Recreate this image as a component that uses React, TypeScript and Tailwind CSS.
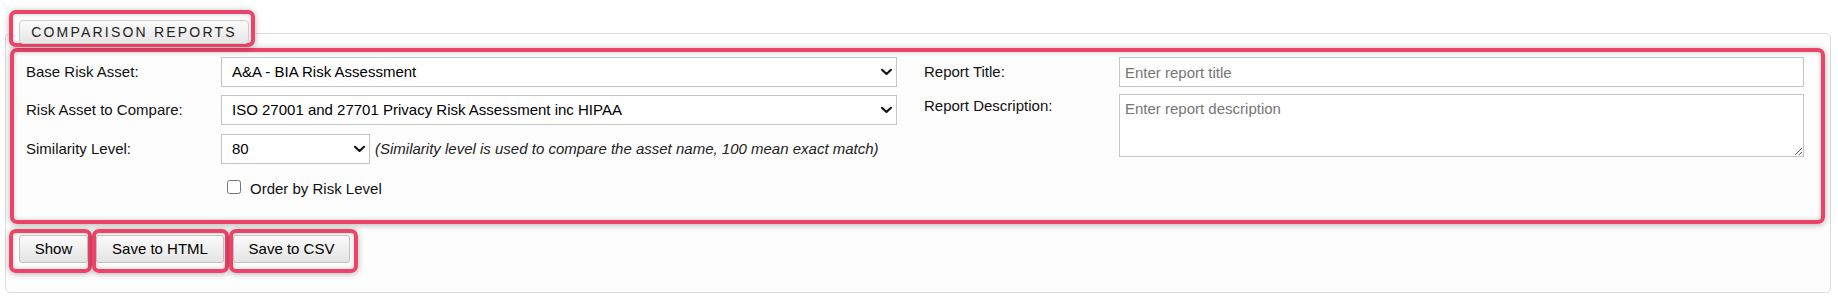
import React from "react";

const Chevron = () => (
  <svg width="11" height="7" viewBox="0 0 11 7" className="pointer-events-none absolute right-[5px] top-1/2 -translate-y-1/2">
    <path d="M1 1.2 L5.5 5.5 L10 1.2" fill="none" stroke="#111" strokeWidth="2.1" strokeLinecap="round" strokeLinejoin="round" />
  </svg>
);

function Select({ value, width }: { value: string; width: string }) {
  return (
    <div className={`relative h-[30px] ${width}`}>
      <select
        defaultValue={value}
        className="appearance-none w-full h-full border border-[#c4c4c4] bg-white pl-[10px] pr-[24px] text-[15px] text-black outline-none font-['Liberation_Sans',Arial,sans-serif]"
      >
        <option>{value}</option>
      </select>
      <Chevron />
    </div>
  );
}

const btn =
  "h-[28px] flex items-center justify-center rounded-[3px] border border-[#c2c2c2] bg-gradient-to-b from-[#fbfbfb] to-[#e4e4e4] text-[15px] text-black";
const red = "border-4 border-[#ec4468] rounded-[7px] shadow-[0_1px_6px_rgba(0,0,0,0.3),inset_0_0_5px_rgba(0,0,0,0.2)]";

export default function App() {
  return (
    <div className="relative w-[1838px] h-[298px] bg-white font-['Liberation_Sans',Arial,sans-serif] text-[15px] text-[#111]">
      <div className="absolute left-0 top-0 w-full h-full pt-[33px] pl-[5px]">
        <div className="w-[1826px] h-[260px] border border-[#dcdcdc] rounded-[5px] bg-[#fdfdfd] pt-[14px] pl-[4px]">
          <div className={`${red} w-[1815px] h-[176px] flex pl-[12px] pt-[5px]`}>
            <div className="w-[871px] flex flex-col">
              <div className="flex items-center h-[30px]">
                <div className="w-[195px]">Base Risk Asset:</div>
                <Select value="A&A - BIA Risk Assessment" width="w-[676px]" />
              </div>
              <div className="flex items-center h-[30px] mt-[8px]">
                <div className="w-[195px]">Risk Asset to Compare:</div>
                <Select value="ISO 27001 and 27701 Privacy Risk Assessment inc HIPAA" width="w-[676px]" />
              </div>
              <div className="flex items-center h-[30px] mt-[9px]">
                <div className="w-[195px]">Similarity Level:</div>
                <Select value="80" width="w-[149px]" />
                <span className="ml-[5px] italic text-[#222]">
                  (Similarity level is used to compare the asset name, 100 mean exact match)
                </span>
              </div>
              <label className="flex items-center mt-[10px] pl-[201px]">
                <input type="checkbox" className="w-[14px] h-[14px] m-0" />
                <span className="ml-[9px] mt-[4px]">Order by Risk Level</span>
              </label>
            </div>
            <div className="ml-[27px] flex flex-col">
              <div className="flex items-center h-[30px]">
                <div className="w-[195px]">Report Title:</div>
                <input
                  placeholder="Enter report title"
                  className="w-[685px] h-[30px] border border-[#c4c4c4] bg-white px-[5px] text-[15px] outline-none placeholder:text-[#767676]"
                />
              </div>
              <div className="flex mt-[7px]">
                <div className="w-[195px] pt-[1px]">Report Description:</div>
                <textarea
                  placeholder="Enter report description"
                  className="w-[685px] h-[63px] border border-[#c4c4c4] bg-white px-[5px] pt-[3px] text-[15px] outline-none placeholder:text-[#767676]"
                />
              </div>
            </div>
          </div>
          <div className="flex mt-[5px] -ml-px">
            <div className={`${red} pl-[6px] pt-[2px] pb-[6px]`}>
              <button className={`${btn} w-[69px]`}>Show</button>
            </div>
            <div className={`${red} pt-[2px] pb-[6px] pr-[1px]`}>
              <button className={`${btn} w-[128px]`}>Save to HTML</button>
            </div>
            <div className={`${red} pt-[2px] pb-[6px] pr-[4px]`}>
              <button className={`${btn} w-[117px]`}>Save to CSV</button>
            </div>
          </div>
        </div>
      </div>
      <div className={`${red} absolute left-[9px] top-[10px] w-[246px] h-[37px] pl-[6px] pt-[6px] pr-[2px] bg-white`}>
        <div className="h-[24px] w-[230px] flex items-center justify-center rounded-[4px] border border-[#cfcfcf] bg-gradient-to-b from-[#fbfbfb] to-[#e6e6e6] text-[14px] tracking-[2.2px] text-[#222] shadow-[0_1px_2px_rgba(0,0,0,0.1)]">
          COMPARISON REPORTS
        </div>
      </div>
    </div>
  );
}
